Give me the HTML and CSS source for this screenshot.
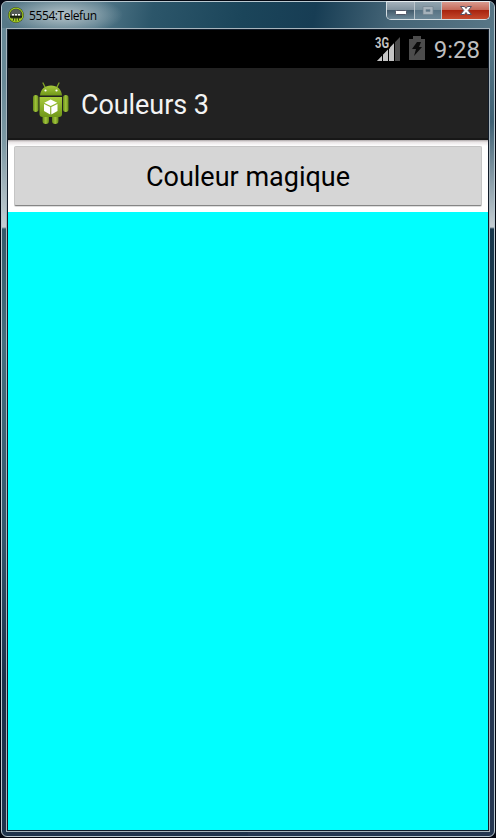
FILE: index.html
```html
<!DOCTYPE html>
<html lang="fr">
<head>
<meta charset="utf-8">
<title>5554:Telefun</title>
<link rel="stylesheet" href="styles.css">
</head>
<body>
<div class="window">
  <header class="titlebar">
    <svg class="app-icon" width="16" height="16" viewBox="0 0 16 16">
      <circle cx="8" cy="8" r="7.8" fill="#1d260c"/>
      <circle cx="8" cy="8" r="6.900" fill="#34411a" stroke="#9bc31f" stroke-width="1.3"/>
      <path d="M2.500 7.500a5.500 5.500 0 0 1 11 0v1h-11z" fill="#555c58"/>
      <path d="M2 9h12v1.500H2z" fill="#17200b"/>
      <path d="M4 7h2v1.500H4zM7 7h2v1.500H7zM10 7h2v1.500h-2z" fill="#fff"/>
      <path d="M2.500 11.500H5v1.500H3.500zM6 11.500h1.500V14H6zM8.500 11.500H10V14H8.500zM11 11.500h2.500l-1 1.500H11z" fill="#b3da26"/>
    </svg>
    <span class="title">5554:Telefun</span>
    <div class="controls">
      <div class="control minimize"><svg width="27" height="17" viewBox="0 0 27 17"><rect x="8.500" y="8.500" width="11" height="4" rx="1" fill="#fff" stroke="#535666"/></svg></div>
      <div class="control maximize"><svg width="26" height="17" viewBox="0 0 26 17"><path d="M8 4.500h10v8H8zM11 7.500v2h4v-2z" fill="#a6b2bb" fill-rule="evenodd" stroke="#71838f" stroke-width=".7"/></svg></div>
      <div class="control close"><svg width="47" height="17" viewBox="0 0 47 17"><path d="M18.500 4.500h4l1.500 2 1.500-2h4l-3.300 4 3.300 4h-4l-1.500-2-1.500 2h-4l3.300-4z" fill="#fff" stroke="#545062"/></svg></div>
    </div>
  </header>
  <main class="screen">
    <div class="statusbar">
      <svg class="signal" width="26" height="26" viewBox="0 0 26 26">
        <path d="M25 1v24H2z" fill="#4c4c4c"/>
        <path d="M19 7.300V25H2z" fill="#c4c4c4"/>
        <path d="M7.500 16v9M13.500 10v15M19.500 6v19" stroke="#000"/>
        <path d="M0 0h15v12.500H0z" fill="#000"/>
        <text class="network" x="0" y="12" textLength="14" lengthAdjust="spacingAndGlyphs">3G</text>
      </svg>
      <svg class="battery" width="16" height="24" viewBox="0 0 16 24">
        <path d="M4 0h8v3h4v21H0V3h4z" fill="#4c4c4c"/>
        <path d="M8 6h4l-2 5h3L5 20l2-7H3z" fill="#0b0b0b"/>
      </svg>
      <span class="clock">9:28</span>
    </div>
    <div class="actionbar">
      <svg class="launcher" width="38" height="44" viewBox="0 0 38 44">
        <defs>
          <linearGradient id="green" x2="0" y2="1"><stop stop-color="#a8cb3c"/><stop offset="1" stop-color="#709719"/></linearGradient>
          <linearGradient id="limb"><stop stop-color="#668a19"/><stop offset=".5" stop-color="#a1c43b"/><stop offset="1" stop-color="#668a19"/></linearGradient>
        </defs>
        <path d="M13 5l-2-4M25 5l2-4" stroke="#82a626" stroke-width="1.300" stroke-linecap="round"/>
        <path d="M8 13.500C8.500 7 13 3.500 19 3.500s10.500 3.500 11 10z" fill="url(#green)"/>
        <circle cx="13.500" cy="8.500" r="1.100" fill="#fff"/><circle cx="24.500" cy="8.500" r="1.100" fill="#fff"/>
        <rect x="1" y="13" width="5.500" height="17" rx="2.700" fill="url(#limb)"/>
        <rect x="31" y="13" width="5.500" height="17" rx="2.700" fill="url(#limb)"/>
        <rect x="10.500" y="29" width="6.500" height="13" rx="3.200" fill="url(#limb)"/>
        <rect x="20" y="29" width="6.500" height="13" rx="3.200" fill="url(#limb)"/>
        <path d="M7.500 15h22.500V32q0 3-3 3H10.500q-3 0-3-3z" fill="url(#green)"/>
        <path d="M18.700 17.500l6.500 3.200-6.500 3.200-6.500-3.200zM12 22l6.200 3v7.500L12 29zM25.500 22l-6.200 3v7.500l6.200-3.500z" fill="#fff"/>
      </svg>
      <h1 class="heading">Couleurs 3</h1>
    </div>
    <div class="button-row"><button class="magic">Couleur magique</button></div>
    <div class="colour"></div>
  </main>
</div>
</body>
</html>
```

FILE: styles.css
```css
* { box-sizing: border-box; }
html { background: #030711; }
body {
  margin: 0;
  height: 838px;
  padding: 1px;
  font-family: Roboto, sans-serif;
}
.window {
  height: 836px;
  display: flex;
  flex-direction: column;
  padding: 0 4px 4px;
  border: 1px solid #b9c8d0;
  border-radius: 6px;
  background:
    linear-gradient(#688997, #688997 80px, #7c98a4 140px, #c5ced3 225px, #35596a 227px, #47707f 340px, #35566c 540px, #1c3049 680px, #20344d) left / 50% 100% no-repeat,
    linear-gradient(#56788a, #557686 50px, #3f6174 120px, #c5ced3 225px, #17364b 227px, #1f3d50 400px, #182945 560px, #253751 680px) right / 50% 100% no-repeat;
}
.titlebar {
  height: 26px;
  flex: none;
  display: flex;
  align-items: flex-start;
  margin: 0 -4px;
  padding-left: 6px;
  border-radius: 5px 5px 0 0;
  background:
    radial-gradient(ellipse 60px 20px at 61px 13px, #c4cfd4dd, #9fb2ba99 55%, transparent),
    linear-gradient(100deg, #567887, #54798a 95px, #2c566a 150px, #1b455a 240px, #173d54 310px, #446476 385px, #587686);
}
.app-icon { margin-top: 5px; flex: none; }
.title {
  margin: 5px 0 0 5px;
  font: 12px/17px "Open Sans", sans-serif;
  letter-spacing: -.4px;
  color: #000;
}
.controls {
  display: flex;
  height: 19px;
  margin: -1px 4px 0 auto;
  border: 1px solid #d4dde2;
  border-top-color: #e6ecef;
  border-radius: 0 0 5px 5px;
  overflow: hidden;
}
.control {
  height: 17px;
  border-right: 1px solid #bac5cc;
  background: linear-gradient(#a4b1bb, #80919d 48%, #435b6c 50%, #6c8797);
}
.control svg { display: block; }
.minimize { width: 28px; }
.maximize { width: 27px; background: linear-gradient(#91a4af, #7b909d 48%, #587384 50%, #6c8797); }
.close {
  width: 47px;
  border: 0;
  background: linear-gradient(#d99a8e, #c46756 48%, #a8240f 50%, #c54a2d);
}
.screen {
  flex: 1;
  display: flex;
  flex-direction: column;
  border: 1px solid #a7b4bc;
  padding: 1px;
  background: #101b29;
}
.statusbar {
  height: 38px;
  flex: none;
  display: flex;
  align-items: flex-start;
  justify-content: flex-end;
  padding: 6px 8px 0 0;
  background: #000;
  color: #bebebe;
}
.signal { overflow: visible; }
.network { font: bold 14px Roboto, sans-serif; fill: #c4c4c4; }
.battery { margin: 0 0 0 8px; }
.clock { margin-left: 9px; font-size: 24px; line-height: 28px; }
.actionbar {
  height: 72px;
  flex: none;
  display: flex;
  align-items: center;
  padding-left: 24px;
  border-bottom: 2px solid #171717;
  background: #222;
}
.launcher { margin-top: 2px; }
.heading {
  margin: 5px 0 0 11px;
  font-size: 27px;
  font-weight: 400;
  line-height: 33px;
  letter-spacing: -.08px;
  color: #f3f3f3;
}
.button-row {
  height: 72px;
  flex: none;
  padding: 6px 6px 5px;
  background: linear-gradient(#aaa5a6, #e9e4e5 2px, #fff 6px);
}
.magic {
  display: block;
  width: 100%;
  height: 60px;
  padding: 1px 0 0;
  border: 1px solid #c5c5c5;
  border-bottom: 1px solid #858585;
  border-radius: 2px;
  background: #d6d6d6;
  box-shadow: 0 1px #ddd;
  color: #000;
  font: 27px/32px Roboto, sans-serif;
}
.colour { flex: 1; background: #0ff; }
```
